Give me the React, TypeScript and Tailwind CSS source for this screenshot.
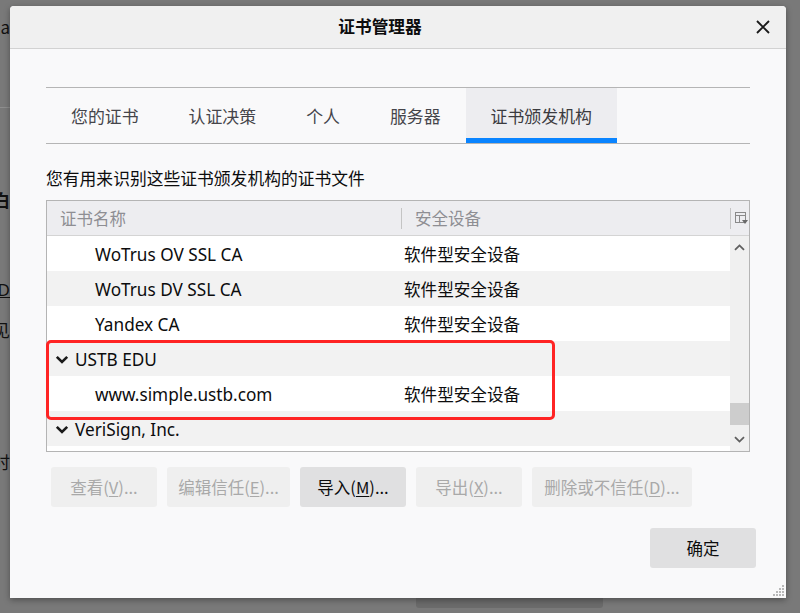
import React from 'react';

const cjk = { fontFamily: '"Noto Sans CJK SC", "Noto Sans", sans-serif' };
const latin = { fontFamily: '"Noto Sans", "Noto Sans CJK SC", sans-serif' };

function Chevron() {
  return (
    <svg width="14" height="9" viewBox="0 0 14 9">
      <path d="M1.8 1.8 L7 7 L12.2 1.8" fill="none" stroke="#1a1a1a" strokeWidth="2.6" />
    </svg>
  );
}

function ScrollArrow({ up = false }: { up?: boolean }) {
  return (
    <svg width="11" height="7" viewBox="0 0 11 7" className={up ? 'rotate-180' : ''}>
      <path d="M1 1.2 L5.5 5.6 L10 1.2" fill="none" stroke="#5f5f5f" strokeWidth="1.8" />
    </svg>
  );
}

function ColumnPicker() {
  return (
    <svg width="13" height="13" viewBox="0 0 13 13">
      <rect x="0.5" y="0.5" width="10" height="10" fill="none" stroke="#8a8a8a" />
      <line x1="0.5" y1="3.5" x2="10.5" y2="3.5" stroke="#8a8a8a" />
      <line x1="4.5" y1="3.5" x2="4.5" y2="10.5" stroke="#8a8a8a" />
      <path d="M7 8 L13 8 L10 12 Z" fill="#6a6a6a" />
    </svg>
  );
}

type Row = { name: string; device?: string; parent?: boolean };

const rows: Row[] = [
  { name: 'WoTrus OV SSL CA', device: '软件型安全设备' },
  { name: 'WoTrus DV SSL CA', device: '软件型安全设备' },
  { name: 'Yandex CA', device: '软件型安全设备' },
  { name: 'USTB EDU', parent: true },
  { name: 'www.simple.ustb.com', device: '软件型安全设备' },
  { name: 'VeriSign, Inc.', parent: true },
];

const tabs = ['您的证书', '认证决策', '个人', '服务器', '证书颁发机构'];

function Btn({ label, mn, rest, w, enabled = false }: { label: string; mn: string; rest: string; w: string; enabled?: boolean }) {
  return (
    <div
      className={`${w} h-[40px] rounded-[3px] flex items-center justify-center text-[16.5px] ${
        enabled ? 'bg-[#e0e0e1] text-[#0c0c0d]' : 'bg-[#efefef] text-[#a9a9a9]'
      }`}
      style={cjk}
    >
      {label}(<span className="underline underline-offset-2">{mn}</span>){rest}
    </div>
  );
}

export default function App() {
  return (
    <div className="relative w-[800px] h-[613px] overflow-hidden bg-[#797979]" style={cjk}>
      {/* page behind the dialog */}
      <div className="w-[10px] h-full overflow-hidden flex flex-col items-end text-[17px] text-[#111]">
        <div className="mt-[14px] leading-[26px] whitespace-nowrap">Mozilla</div>
        <div className="mt-[67px] h-px w-[10px] bg-[#8e8e8e]" />
        <div className="mt-[79px] leading-[26px] whitespace-nowrap font-bold">明白</div>
        <div className="mt-[64px] leading-[26px] whitespace-nowrap underline" style={latin}>ID</div>
        <div className="mt-[14px] leading-[26px] whitespace-nowrap">可见</div>
        <div className="mt-[106px] leading-[26px] whitespace-nowrap">何时</div>
        <div className="mt-[79px] leading-[26px] whitespace-nowrap">件，</div>
      </div>
      <div className="absolute left-[416px] top-[596px] w-[187px] h-[12px] rounded-[3px] bg-[#6b6b6b]" />

      {/* dialog */}
      <div className="absolute left-[10px] top-[6px] w-[776px] h-[592px] bg-[#f9f9fa] rounded-t-[4px] shadow-[0_2px_6px_rgba(0,0,0,0.35)] flex flex-col">
        <div className="h-[43px] shrink-0 bg-[#f0f0f0] border-b border-[#d2d2d2] rounded-t-[4px] flex items-center">
          <div className="flex-1 text-center text-[16.7px] font-bold text-[#0c0c0d]">证书管理器</div>
          <div className="w-[26px] mr-[10px] flex items-center justify-center">
            <svg width="14" height="14" viewBox="0 0 14 14">
              <path d="M1 1 L13 13 M13 1 L1 13" stroke="#1a1a1a" strokeWidth="1.9" />
            </svg>
          </div>
        </div>

        <div className="px-[36px] pt-[38px] flex flex-col">
          {/* tabs */}
          <div className="h-[57px] border-y border-[#b5b5b5] flex">
            {tabs.map((t, i) => {
              const active = i === tabs.length - 1;
              return (
                <div
                  key={t}
                  className={`px-[25px] flex flex-col text-[16.9px] ${active ? 'bg-[#ededf0] text-[#3b3b3f]' : 'text-[#45454a]'}`}
                >
                  <div className="flex-1 flex items-center pt-[6px]">{t}</div>
                  <div className={`h-[5px] -mx-[25px] ${active ? 'bg-[#0a84ff]' : ''}`} />
                </div>
              );
            })}
          </div>

          <div className="mt-[21px] text-[16.8px] leading-[26px] text-[#0c0c0d]">您有用来识别这些证书颁发机构的证书文件</div>

          {/* tree table */}
          <div className="relative mt-[9px] h-[252px] border border-[#b4b4b4] bg-white flex flex-col">
            <div className="h-[35px] shrink-0 bg-[#ededf0] border-b border-[#d4d4d4] flex items-center text-[16.5px] text-[#8e8e93]">
              <div className="w-[354px] pl-[13px] pt-[1px]">证书名称</div>
              <div className="w-px h-[21px] bg-[#c4c4c4]" />
              <div className="flex-1 pl-[13px] pt-[1px]">安全设备</div>
              <div className="w-px h-[21px] bg-[#c4c4c4]" />
              <div className="w-[18px] flex justify-center pl-[2px]">
                <ColumnPicker />
              </div>
            </div>
            <div className="flex-1 flex min-h-0">
              <div className="flex-1 overflow-hidden">
                {rows.map((r, i) => (
                  <div
                    key={r.name}
                    className={`h-[35px] pt-[2px] flex items-center ${i % 2 === 1 ? 'bg-[#f2f2f2]' : 'bg-white'}`}
                  >
                    <div className="w-[357px] flex items-center text-[17.2px] text-[#0c0c0d]" style={latin}>
                      {r.parent ? (
                        <>
                          <span className="ml-[8px] mr-[6px] flex"><Chevron /></span>
                          {r.name}
                        </>
                      ) : (
                        <span className="ml-[48px]">{r.name}</span>
                      )}
                    </div>
                    <div className="text-[16.6px] text-[#0c0c0d]" style={cjk}>{r.device}</div>
                  </div>
                ))}
                <div className="h-[6px] bg-white" />
              </div>
              <div className="w-[19px] bg-[#f0f0f0] flex flex-col items-center">
                <div className="h-[23px] flex items-center"><ScrollArrow up /></div>
                <div className="flex-1 w-full flex flex-col">
                  <div className="h-[144px]" />
                  <div className="h-[22px] w-full bg-[#cdcdcd]" />
                </div>
                <div className="h-[24px] flex items-center"><ScrollArrow /></div>
              </div>
            </div>
            <div className="absolute left-[-1px] top-[139px] w-[509px] h-[80px] border-[3px] border-[#ff2424] rounded-[5px]" />
          </div>

          {/* action buttons */}
          <div className="mt-[15px] ml-[5px] flex gap-[10px]">
            <Btn label="查看" mn="V" rest="..." w="w-[106px]" />
            <Btn label="编辑信任" mn="E" rest="..." w="w-[123px]" />
            <Btn label="导入" mn="M" rest="..." w="w-[106px]" enabled />
            <Btn label="导出" mn="X" rest="..." w="w-[106px]" />
            <Btn label="删除或不信任" mn="D" rest="..." w="w-[160px]" />
          </div>

          <div className="mt-[21px] flex justify-end -mr-[6px]">
            <div className="w-[106px] h-[40px] rounded-[3px] bg-[#e0e0e1] flex items-center justify-center text-[16.5px] text-[#0c0c0d]">确定</div>
          </div>
        </div>

        <div className="mt-auto flex justify-end pr-[1px] pb-[1px]">
          <svg width="12" height="12" viewBox="0 0 12 12">
            {[
              [9, 0], [6, 3], [9, 3], [3, 6], [6, 6], [9, 6], [0, 9], [3, 9], [6, 9], [9, 9],
            ].map(([x, y]) => (
              <rect key={`${x}-${y}`} x={x} y={y} width="2" height="2" fill="#b8b8b8" />
            ))}
          </svg>
        </div>
      </div>
    </div>
  );
}
